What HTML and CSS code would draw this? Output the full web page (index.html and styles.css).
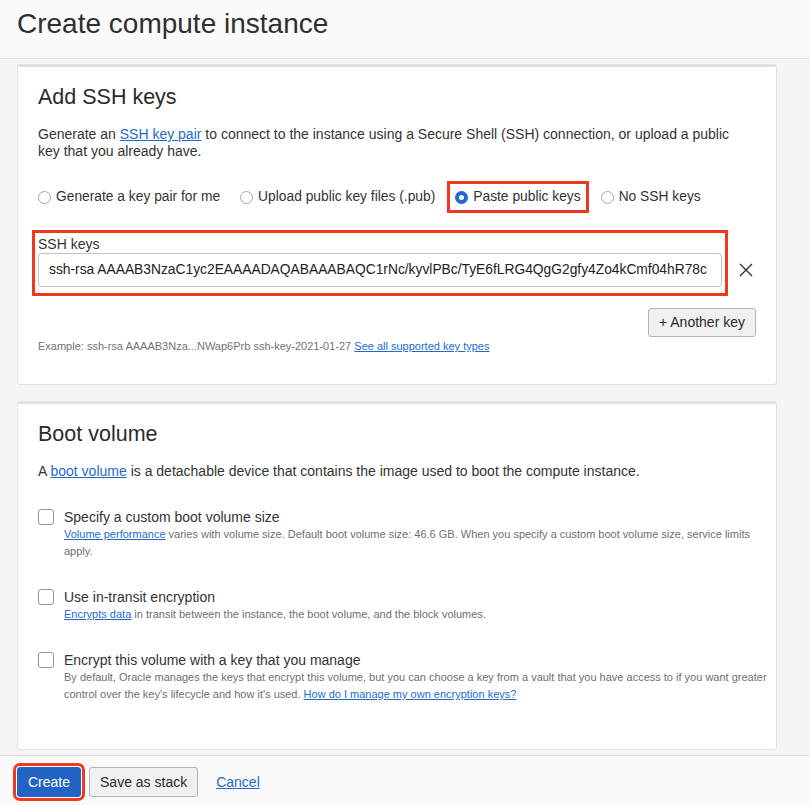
FILE: index.html
```html
<!DOCTYPE html>
<html lang="en">
<head>
<meta charset="utf-8">
<title>Create compute instance</title>
<link rel="stylesheet" href="styles.css">
</head>
<body>
<header class="page-header">
  <h1 class="page-title">Create compute instance</h1>
</header>
<main class="page-body">
  <section class="card card-ssh">
    <h2 class="card-title">Add SSH keys</h2>
    <p class="intro">Generate an <a href="#">SSH key pair</a> to connect to the instance using a Secure Shell (SSH) connection, or upload a public<br>key that you already have.</p>
    <div class="radio-group">
      <label class="radio"><span class="radio-dot"></span>Generate a key pair for me</label>
      <label class="radio"><span class="radio-dot"></span>Upload public key files (.pub)</label>
      <label class="radio radio-on highlight-radio"><span class="radio-dot"></span>Paste public keys</label>
      <label class="radio"><span class="radio-dot"></span>No SSH keys</label>
    </div>
    <div class="key-row">
      <div class="key-field">
        <div class="field-label">SSH keys</div>
        <div class="text-input">ssh-rsa AAAAB3NzaC1yc2EAAAADAQABAAABAQC1rNc/kyvlPBc/TyE6fLRG4QgG2gfy4Zo4kCmf04hR78c</div>
      </div>
      <span class="remove-key" aria-label="Remove">
        <svg width="14" height="14" viewBox="0 0 14 14"><path d="M1 1L13 13M13 1L1 13" stroke="#333" stroke-width="1.4" fill="none"/></svg>
      </span>
    </div>
    <div class="key-actions"><button class="btn">+ Another key</button></div>
    <p class="hint">Example: ssh-rsa AAAAB3Nza...NWap6Prb ssh-key-2021-01-27 <a href="#">See all supported key types</a></p>
  </section>

  <section class="card card-boot">
    <h2 class="card-title">Boot volume</h2>
    <p class="intro">A <a href="#">boot volume</a> is a detachable device that contains the image used to boot the compute instance.</p>
    <div class="check-item">
      <span class="checkbox"></span>
      <div class="check-text">
        <div class="check-label">Specify a custom boot volume size</div>
        <div class="check-sub"><a href="#">Volume performance</a> varies with volume size. Default boot volume size: 46.6 GB. When you specify a custom boot volume size, service limits<br>apply.</div>
      </div>
    </div>
    <div class="check-item">
      <span class="checkbox"></span>
      <div class="check-text">
        <div class="check-label">Use in-transit encryption</div>
        <div class="check-sub"><a href="#">Encrypts data</a> in transit between the instance, the boot volume, and the block volumes.</div>
      </div>
    </div>
    <div class="check-item">
      <span class="checkbox"></span>
      <div class="check-text">
        <div class="check-label">Encrypt this volume with a key that you manage</div>
        <div class="check-sub">By default, Oracle manages the keys that encrypt this volume, but you can choose a key from a vault that you have access to if you want greater<br>control over the key's lifecycle and how it's used. <a href="#">How do I manage my own encryption keys?</a></div>
      </div>
    </div>
  </section>
</main>
<footer class="page-footer">
  <button class="btn btn-primary highlight-btn">Create</button>
  <button class="btn btn-footer">Save as stack</button>
  <a href="#" class="cancel">Cancel</a>
</footer>
</body>
</html>
```

FILE: styles.css
```css
* { box-sizing: border-box; }

html, body {
  margin: 0;
  padding: 0;
  overflow: hidden;
}

body {
  background: #f5f5f5;
  font-family: "Liberation Sans", Arial, Helvetica, sans-serif;
  color: #333333;
  width: 810px;
  height: 805px;
}

a {
  color: #1f6acb;
  text-decoration: underline;
}

.page-header {
  height: 59px;
  background: #fafafa;
  border-bottom: 1px solid #e2e2e2;
  padding: 5px 17px 0;
}

.page-title {
  margin: 0;
  font-size: 28px;
  font-weight: 400;
  line-height: 38px;
  color: #2f2f2f;
}

.page-body {
  padding: 5px 33px 5px 17px;
  display: flex;
  flex-direction: column;
  gap: 16px;
}

.card {
  background: #ffffff;
  border: 1px solid #e2e2e2;
  border-top: 3px solid #e0e1e4;
  border-radius: 3px;
  padding: 17px 20px 0;
}

.card-ssh { padding-bottom: 31px; height: 321px; }
.card-boot { padding-bottom: 46px; height: 349px; }

.card-title {
  margin: 0;
  font-size: 21.5px;
  font-weight: 400;
  line-height: 26px;
  color: #2b2b2b;
}

.intro {
  margin: 16px 0 0;
  font-size: 14px;
  line-height: 17px;
  color: #333;
}

.radio-group {
  margin-top: 29px;
  display: flex;
  gap: 20px;
  height: 16px;
  align-items: center;
}

.radio {
  display: inline-flex;
  align-items: center;
  gap: 5px;
  font-size: 13.8px;
  line-height: 16px;
  color: #333;
  white-space: nowrap;
}

.radio-dot {
  width: 13px;
  height: 13px;
  border-radius: 50%;
  border: 1px solid #a8a8a8;
  background: #fff;
  flex: none;
}

.radio-on .radio-dot {
  border: 4px solid #2169d0;
  background: #fff;
}

.highlight-radio {
  outline: 3px solid #f0381f;
  outline-offset: 5px;
}

.key-row {
  margin-top: 31px;
  display: flex;
  align-items: flex-start;
}

.key-field {
  width: 684px;
  padding-bottom: 3px;
  outline: 3px solid #f0381f;
  outline-offset: 3px;
}

.field-label {
  font-size: 14px;
  line-height: 16px;
  color: #333;
}

.text-input {
  margin-top: 1px;
  height: 34px;
  border: 1px solid #c4c4c4;
  border-radius: 3px;
  padding: 0 10px;
  font-size: 13.8px;
  line-height: 32px;
  color: #222;
  white-space: nowrap;
  overflow: hidden;
}

.remove-key {
  margin: 27px 0 0 17px;
  width: 14px;
  height: 14px;
  display: block;
}

.remove-key svg { display: block; }

.key-actions {
  margin-top: 18px;
  display: flex;
  justify-content: flex-end;
}

.btn {
  font-family: "Liberation Sans", Arial, Helvetica, sans-serif;
  font-size: 14px;
  color: #2b2b2b;
  background: #f1f1f1;
  border: 1px solid #b3b3b3;
  border-radius: 3px;
  height: 29px;
  padding: 0 10px;
  line-height: 27px;
  cursor: pointer;
}

.hint {
  margin: 2px 0 0;
  font-size: 11px;
  line-height: 14px;
  color: #737373;
}

.check-item {
  margin-top: 29px;
  display: flex;
  align-items: flex-start;
  gap: 10px;
}

.checkbox {
  width: 16px;
  height: 16px;
  border: 1px solid #959595;
  border-radius: 3px;
  background: #fff;
  flex: none;
}

.check-text {
  margin-right: -22px;
}

.check-label {
  font-size: 14px;
  line-height: 16px;
  color: #333;
}

.check-sub {
  margin-top: 1px;
  font-size: 11px;
  line-height: 17px;
  color: #6f6f6f;
  white-space: nowrap;
}

.page-footer {
  height: 50px;
  background: #fafafa;
  border-top: 1px solid #dedede;
  padding: 11px 17px 0;
  display: flex;
  align-items: flex-start;
  gap: 8px;
}

.btn-primary {
  height: 30px;
  background: #2164c4;
  border-color: #2164c4;
  color: #ffffff;
  padding: 0 10px;
  line-height: 28px;
}

.highlight-btn {
  outline: 3px solid #f0381f;
  outline-offset: 1px;
}

.btn-footer {
  height: 30px;
  line-height: 28px;
  padding: 0 10px;
}

.cancel {
  margin-left: 10px;
  font-size: 14px;
  line-height: 30px;
}
```
